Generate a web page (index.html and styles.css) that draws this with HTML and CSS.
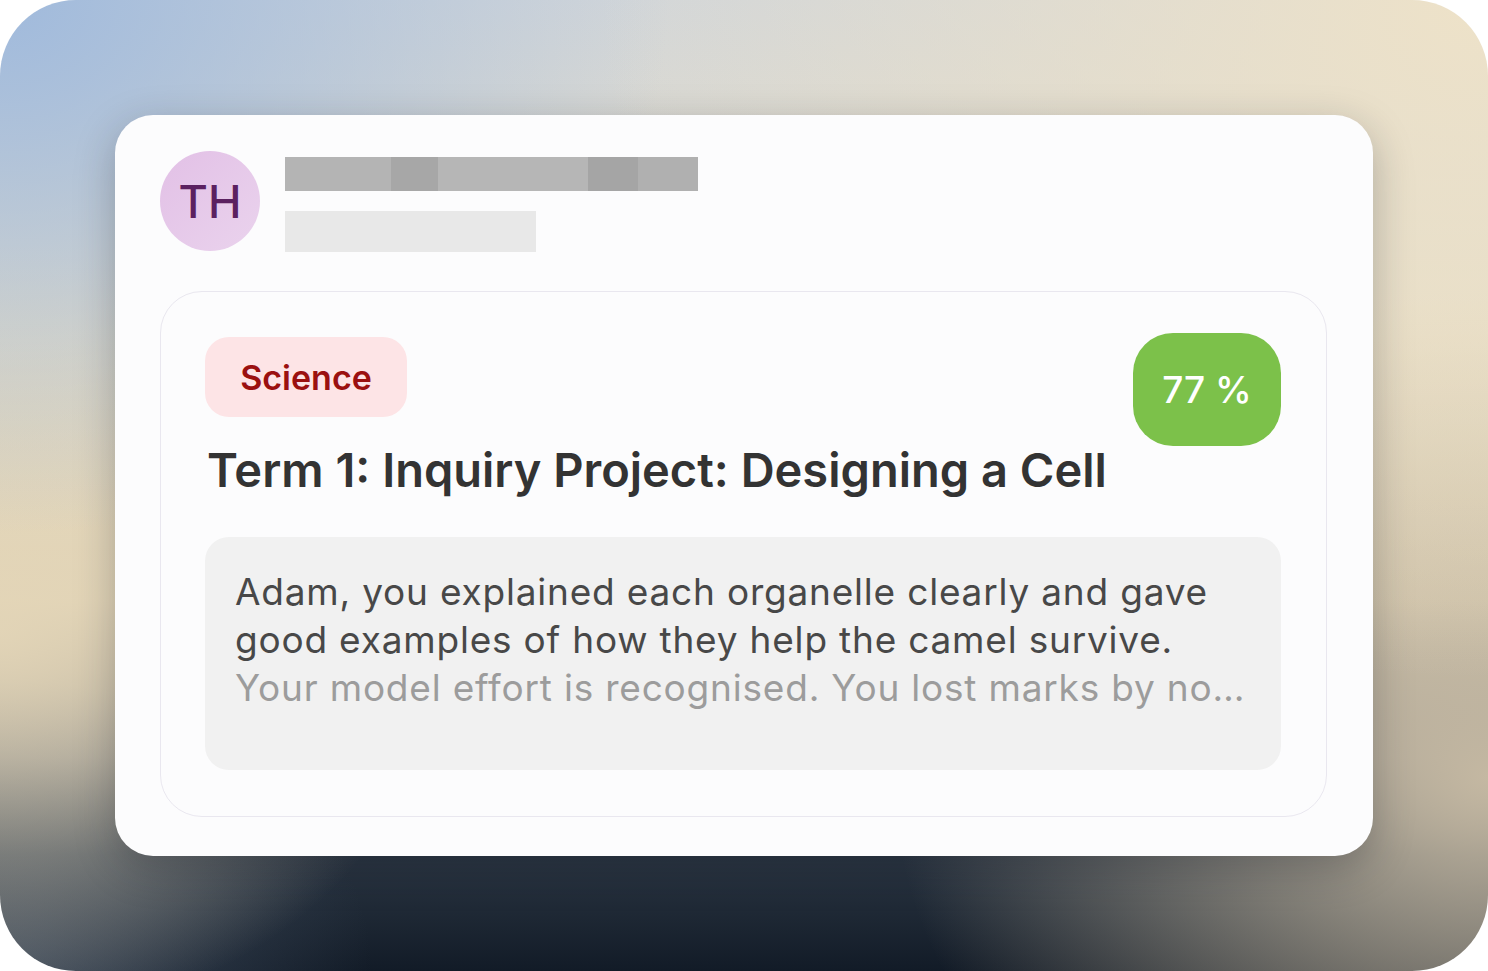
FILE: index.html
```html
<!DOCTYPE html>
<html lang="en">
<head>
    <meta charset="UTF-8">
    <title>Feedback</title>
    <meta name="viewport" content="width=device-width, initial-scale=1.0">
    <link rel="stylesheet" href="styles.css">
</head>
<body>
    <div class="frame">
        <div class="card">
            <div class="header">
                <div class="avatar">TH</div>
                <div class="who">
                    <div class="bar-name">
                        <span class="seg s1"></span>
                        <span class="seg s2"></span>
                        <span class="seg s3"></span>
                        <span class="seg s4"></span>
                        <span class="seg s5"></span>
                    </div>
                    <div class="bar-date"></div>
                </div>
            </div>

            <div class="task">
                <div class="tag">Science</div>
                <div class="score">77 %</div>
                <h2 class="title">Term 1: Inquiry Project: Designing a Cell</h2>
                <div class="feedback">
                    <p>Adam, you explained each organelle clearly and gave good examples of how they help the camel survive.</p>
                    <p class="fade">Your model effort is recognised. You lost marks by not labelling the nucleus and the cell membrane.</p>
                </div>
            </div>
        </div>
    </div>
</body>
</html>
```

FILE: styles.css
```css
html, body {
    margin: 0;
    padding: 0;
    background-color: #ffffff;
}

body {
    font-family: Inter, "Noto Sans", sans-serif;
}

.frame {
    height: 971px;
    box-sizing: border-box;
    padding: 115px;
    border-radius: 76px;
    overflow: hidden;
    background:
        radial-gradient(ellipse 45% 55% at 0% 0%, rgba(160,186,220,1), rgba(160,186,220,0)),
        radial-gradient(ellipse 60% 70% at 100% 0%, rgba(238,226,200,1), rgba(238,226,200,0)),
        radial-gradient(ellipse 40% 50% at 100% 80%, rgba(196,184,162,1), rgba(196,184,162,0)),
        radial-gradient(ellipse 30% 40% at 0% 65%, rgba(228,214,184,0.9), rgba(228,214,184,0)),
        radial-gradient(ellipse 25% 30% at 0% 100%, rgba(72,86,104,0.8), rgba(72,86,104,0)),
        linear-gradient(to bottom, #d2d6d9 0%, #e6ddc7 35%, #ddd0b4 62%, #858584 78%, #2b3643 88%, #121b27 100%);
}

.card {
    height: 100%;
    box-sizing: border-box;
    background-color: #fcfcfd;
    border-radius: 38px;
    padding: 36px 46px 39px 45px;
    box-shadow: 0 12px 40px rgba(20, 25, 35, 0.28);
    display: flex;
    flex-direction: column;
    gap: 39px;
}

.header {
    display: flex;
    align-items: flex-start;
    gap: 25px;
}

.avatar {
    width: 100px;
    height: 100px;
    border-radius: 50%;
    background: linear-gradient(135deg, #e2c0e6, #ead3ed);
    color: #5b2160;
    font-size: 45px;
    font-weight: 500;
    display: flex;
    align-items: center;
    justify-content: center;
    flex-shrink: 0;
}

.who {
    padding-top: 6px;
    display: flex;
    flex-direction: column;
    gap: 20px;
}

.bar-name {
    display: flex;
    height: 34px;
    width: 413px;
}

.seg {
    height: 100%;
    background-color: #b4b4b4;
}

.s1 { width: 106px; }
.s2 { width: 47px; background-color: #a7a7a7; }
.s3 { width: 150px; background-color: #b6b6b6; }
.s4 { width: 50px; background-color: #a5a5a5; }
.s5 { width: 60px; background-color: #b0b0b0; }

.bar-date {
    width: 251px;
    height: 41px;
    background-color: #e8e8e8;
}

.task {
    flex: 1;
    border: 1px solid #e9e7ef;
    border-radius: 42px;
    padding: 41px 45px 45px 44px;
    display: grid;
    grid-template-columns: 1fr auto;
    grid-template-rows: auto auto 1fr;
}

.tag {
    grid-column: 1;
    grid-row: 1;
    justify-self: start;
    margin-top: 4px;
    width: 202px;
    height: 80px;
    box-sizing: border-box;
    border-radius: 24px;
    background-color: #fde4e6;
    color: #9b1010;
    font-size: 34px;
    font-weight: 600;
    display: flex;
    align-items: center;
    justify-content: center;
}

.score {
    grid-column: 2;
    grid-row: 1 / 3;
    align-self: start;
    width: 148px;
    height: 113px;
    border-radius: 40px;
    background-color: #7cc14a;
    color: #ffffff;
    font-size: 37px;
    font-weight: 500;
    display: flex;
    align-items: center;
    justify-content: center;
}

.title {
    grid-column: 1;
    grid-row: 2;
    margin: 25px 0 0 2px;
    font-size: 47px;
    line-height: 56px;
    font-weight: 600;
    letter-spacing: 0;
    color: #333333;
}

.feedback {
    grid-column: 1 / 3;
    grid-row: 3;
    margin-top: 39px;
    background-color: #f1f1f1;
    border-radius: 24px;
    padding: 31px 30px 0 30px;
    height: 233px;
    box-sizing: border-box;
}

.feedback p {
    margin: 0;
    font-size: 37px;
    line-height: 48px;
    color: #484848;
    letter-spacing: 0.8px;
}

.feedback .fade {
    color: #9c9c9c;
    white-space: nowrap;
    overflow: hidden;
    text-overflow: ellipsis;
}
```
